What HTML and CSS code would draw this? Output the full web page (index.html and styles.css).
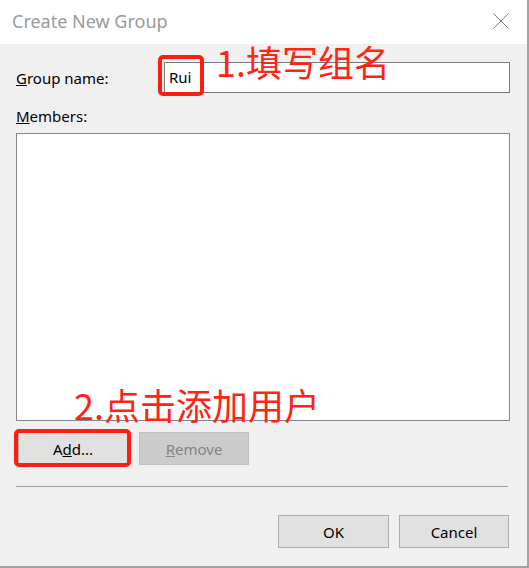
FILE: index.html
```html
<!DOCTYPE html>
<html lang="zh">
<head>
<meta charset="utf-8">
<title>Create New Group</title>
<link rel="stylesheet" href="styles.css">
</head>
<body>
<div class="dialog">
  <div class="titlebar">
    <span class="title">Create New Group</span>
    <svg class="close" width="16" height="16" viewBox="0 0 16 16"><path d="M0.5 0.5 L15.5 15.5 M15.5 0.5 L0.5 15.5" stroke="#7a7a7a" stroke-width="1" fill="none"/></svg>
  </div>
  <div class="content">
    <div class="row-name">
      <label class="label name-label"><u>G</u>roup name:</label>
      <div class="input">Rui</div>
    </div>
    <label class="label members-label"><u>M</u>embers:</label>
    <div class="listbox"></div>
    <div class="row-buttons">
      <button class="btn">A<u>d</u>d...</button>
      <button class="btn disabled"><u>R</u>emove</button>
    </div>
    <div class="separator"></div>
    <div class="row-footer">
      <button class="btn wide">OK</button>
      <button class="btn">Cancel</button>
    </div>
  </div>
  <div class="mark mark-name"></div>
  <div class="mark mark-add"></div>
  <div class="note note-1">1.填写组名</div>
  <div class="note note-2">2.点击添加用户</div>
</div>
</body>
</html>
```
FILE: styles.css
```css
html, body {
  margin: 0;
  padding: 0;
  background: #f0f0f0;
}
.dialog {
  position: relative;
  width: 527px;
  height: 566px;
  background: #f0f0f0;
  border-right: 2px solid #a3a3a3;
  border-bottom: 2px solid #a3a3a3;
  font-family: "Noto Sans", "Open Sans", sans-serif;
  font-size: 15px;
  color: #000;
}
.titlebar {
  height: 44px;
  background: #fff;
  display: flex;
  align-items: center;
  justify-content: space-between;
  padding: 0 18px 0 12px;
}
.title {
  font-size: 18px;
  color: #9a9a9a;
  margin-top: -2px;
}
.close {
  display: block;
  margin-top: -2px;
}
.content {
  padding: 0 17px 0 16px;
}
.row-name {
  display: flex;
  align-items: center;
  margin-top: 18px;
}
.label {
  display: block;
  line-height: 20px;
}
.name-label {
  width: 148px;
}
.input {
  flex: 1;
  height: 31px;
  box-sizing: border-box;
  background: #fff;
  border: 1px solid #7a7a7a;
  padding: 3px 4px;
  line-height: 22px;
}
.members-label {
  margin-top: 13px;
}
.listbox {
  margin-top: 7px;
  height: 288px;
  box-sizing: border-box;
  background: #fff;
  border: 1px solid #828790;
}
.row-buttons {
  display: flex;
  gap: 11px;
  margin-top: 11px;
  padding-left: 2px;
}
.btn {
  font-family: inherit;
  font-size: 15px;
  color: #000;
  width: 110px;
  height: 33px;
  box-sizing: border-box;
  background: #e1e1e1;
  border: 1px solid #adadad;
  padding: 0;
  line-height: 20px;
}
.btn.disabled {
  background: #cccccc;
  border-color: #bfbfbf;
  color: #838383;
}
.separator {
  margin-top: 21px;
  width: 492px;
  height: 1px;
  background: #a0a0a0;
}
.row-footer {
  display: flex;
  justify-content: flex-end;
  gap: 10px;
  margin-top: 28px;
  padding-right: 1px;
}
.btn.wide {
  width: 111px;
}
.mark {
  position: absolute;
  box-sizing: border-box;
  border: 4px solid #ff1d0d;
  border-radius: 5px;
}
.mark-name {
  left: 158px;
  top: 55px;
  width: 46px;
  height: 41px;
}
.mark-add {
  left: 14px;
  top: 429px;
  width: 117px;
  height: 38px;
}
.note {
  position: absolute;
  font-family: "Noto Sans CJK SC", "Noto Sans", sans-serif;
  font-size: 36px;
  line-height: 42px;
  color: #ff2314;
  white-space: nowrap;
}
.note-1 {
  left: 216px;
  top: 40px;
}
.note-2 {
  left: 74px;
  top: 383px;
}
```
